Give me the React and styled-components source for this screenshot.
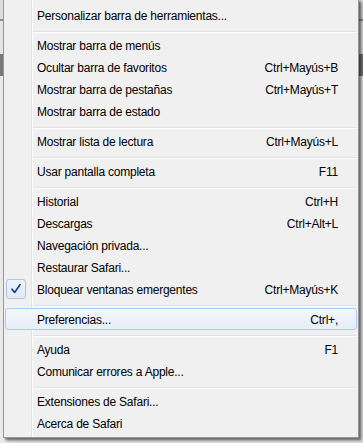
import React from "react";
import styled, { createGlobalStyle } from "styled-components";

const Global = createGlobalStyle`
  html, body { margin: 0; padding: 0; }
  body {
    width: 363px;
    height: 443px;
    overflow: hidden;
    font-family: "Liberation Sans", Arial, sans-serif;
  }
`;

const Backdrop = styled.div`
  width: 363px;
  height: 443px;
  overflow: hidden;
  background: linear-gradient(
    to bottom,
    #dcdcdc 0 19px,
    #8e8e8e 19px 21px,
    #e4e4e4 21px 54px,
    #7a7a7a 54px 76px,
    #e9e9e9 76px
  );
  display: flex;
  align-items: flex-start;
`;

const Menu = styled.div`
  margin: -1px 0 0 3px;
  width: 354px;
  border: 1px solid #979797;
  padding: 4px 0 3px;
  background-color: #f0f0f0;
  background-image: linear-gradient(
    to right,
    transparent 27px,
    #e2e3e3 27px 28px,
    #ffffff 28px 29px,
    transparent 29px
  );
  box-shadow: 2px 2px 2px rgba(0, 0, 0, 0.45), 4px 4px 3px rgba(0, 0, 0, 0.18);
  display: flex;
  flex-direction: column;
`;

const Row = styled.div`
  height: 22px;
  box-sizing: border-box;
  margin: 0 1px 0 1px;
  border: 1px solid ${(p) => (p.$active ? "#aecbef" : "transparent")};
  border-radius: 3px;
  background: ${(p) =>
    p.$active
      ? "linear-gradient(to bottom, #f3f7fc, #e7eef8)"
      : "transparent"};
  display: grid;
  grid-template-columns: 31px 1fr auto;
  align-items: center;
  padding-right: 18px;
  font-size: 12px;
  letter-spacing: -0.22px;
  color: #000;
  white-space: nowrap;
`;

const Gutter = styled.div`
  height: 20px;
  display: flex;
  align-items: center;
`;

const CheckBox = styled.div`
  width: 20px;
  height: 20px;
  box-sizing: border-box;
  border: 1px solid #a9c3e6;
  border-radius: 3px;
  background: linear-gradient(to bottom, #eef3fa, #e1e9f5);
  display: flex;
  align-items: center;
  justify-content: center;
`;

const Label = styled.span`
  padding-top: 2px;
  line-height: 18px;
`;

const Shortcut = styled.span`
  padding-top: 2px;
  line-height: 18px;
  text-align: right;
`;

const Separator = styled.div`
  height: 8px;
  box-sizing: border-box;
  padding-top: 5px;
  margin: 0 2px 0 29px;
`;

const SepLine = styled.div`
  height: 1px;
  background: #e0e0e0;
  border-bottom: 1px solid #ffffff;
`;

const Check = () => (
  <svg width="12" height="12" viewBox="0 0 12 12">
    <path
      d="M2 6.2 L4.6 9.4 L10 1.8"
      fill="none"
      stroke="#1f3f86"
      strokeWidth="1.7"
      strokeLinecap="round"
      strokeLinejoin="round"
    />
  </svg>
);

const items = [
  { label: "Personalizar barra de herramientas..." },
  "sep",
  { label: "Mostrar barra de menús" },
  { label: "Ocultar barra de favoritos", key: "Ctrl+Mayús+B" },
  { label: "Mostrar barra de pestañas", key: "Ctrl+Mayús+T" },
  { label: "Mostrar barra de estado" },
  "sep",
  { label: "Mostrar lista de lectura", key: "Ctrl+Mayús+L" },
  "sep",
  { label: "Usar pantalla completa", key: "F11" },
  "sep",
  { label: "Historial", key: "Ctrl+H" },
  { label: "Descargas", key: "Ctrl+Alt+L" },
  { label: "Navegación privada..." },
  { label: "Restaurar Safari..." },
  { label: "Bloquear ventanas emergentes", key: "Ctrl+Mayús+K", checked: true },
  "sep",
  { label: "Preferencias...", key: "Ctrl+,", active: true },
  "sep",
  { label: "Ayuda", key: "F1" },
  { label: "Comunicar errores a Apple..." },
  "sep",
  { label: "Extensiones de Safari..." },
  { label: "Acerca de Safari" },
];

export default function App() {
  return (
    <>
      <Global />
      <Backdrop>
        <Menu>
          {items.map((it, i) =>
            it === "sep" ? (
              <Separator key={i}>
                <SepLine />
              </Separator>
            ) : (
              <Row key={i} $active={it.active}>
                <Gutter>
                  {it.checked && (
                    <CheckBox>
                      <Check />
                    </CheckBox>
                  )}
                </Gutter>
                <Label>{it.label}</Label>
                <Shortcut>{it.key || ""}</Shortcut>
              </Row>
            )
          )}
        </Menu>
      </Backdrop>
    </>
  );
}
